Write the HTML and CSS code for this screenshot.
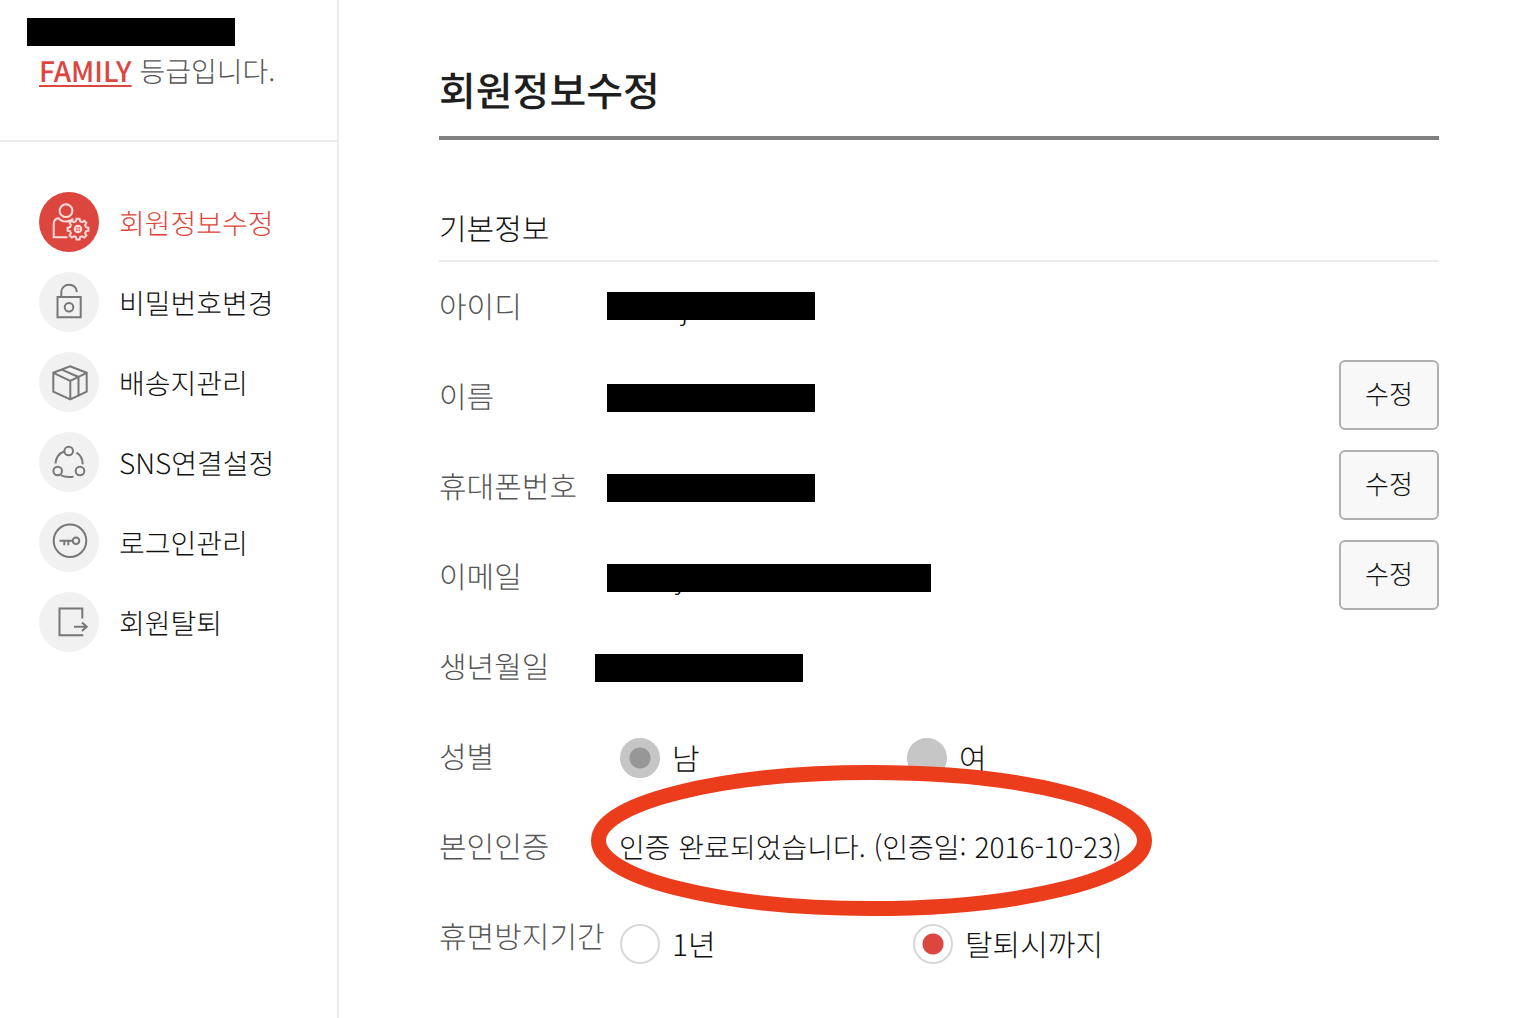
FILE: index.html
```html
<!DOCTYPE html>
<html lang="ko">
<head>
  <meta charset="UTF-8" />
  <title>회원정보수정</title>
  <link rel="stylesheet" href="styles.css">
</head>
<body>
  <aside class="sidebar">
    <div class="grade">
      <div class="mask"></div>
      <p class="grade-text"><a href="#">FAMILY</a> 등급입니다.</p>
    </div>

    <nav class="menu">
      <a class="menu-item active" href="#">
        <svg class="icon" viewBox="0 0 60 60">
          <circle cx="27" cy="18.7" r="6.4" />
          <path d="M28.5 45.3H14.7V32.500c0-4 2-6 5-6.200 1.700 2.200 4.200 3.200 7.300 3.200s5.300-.8 7.300-2.700" />
          <path class="gear" d="M37.500 26.800h3l.6 2.500 2 .8 2.200-1.300 2.100 2.100-1.300 2.200.8 2 2.500.6v3l-2.500.6-.8 2 1.300 2.200-2.100 2.100-2.200-1.300-2 .8-.6 2.500h-3l-.6-2.500-2-.8-2.200 1.300-2.100-2.100 1.300-2.200-.8-2-2.500-.6v-3l2.500-.6.8-2-1.300-2.200 2.100-2.100 2.200 1.300 2-.8z" />
          <circle cx="39" cy="37" r="3.300" />
          <path class="thin" d="M39 33.700v6.600M35.700 37h6.600" />
        </svg>
        <span>회원정보수정</span>
      </a>
      <a class="menu-item" href="#">
        <svg class="icon" viewBox="0 0 60 60">
          <path d="M18.500 25h23.200v20.300H18.500zM22.300 25v-4.500c0-4.800 3.200-7.700 7.700-7.700 4.300 0 7.200 2.500 8 7.200" />
          <circle cx="30" cy="35.300" r="4.300" />
        </svg>
        <span>비밀번호변경</span>
      </a>
      <a class="menu-item" href="#">
        <svg class="icon" viewBox="0 0 60 60">
          <path d="M31 14.300l16.700 6.500v18.900l-16.400 7.600-17-7.600V20.800zM14.300 20.800l17 8 16.400-8M31.300 28.800v18.500M39.500 25v18.500M22.700 17.600l16.800 7.400" />
        </svg>
        <span>배송지관리</span>
      </a>
      <a class="menu-item" href="#">
        <svg class="icon" viewBox="0 0 60 60">
          <circle cx="29.700" cy="19" r="4.300" />
          <circle cx="18.700" cy="39" r="4.300" />
          <circle cx="41" cy="39" r="4.300" />
          <path d="M16.500 31.500c.3-5.500 3-9.800 8.500-12M37.500 20.700c4 2.500 6.200 6.500 6.200 11.500M22 43.300c3.500 1.600 8 1.900 12.500 1.400" />
        </svg>
        <span>SNS연결설정</span>
      </a>
      <a class="menu-item" href="#">
        <svg class="icon" viewBox="0 0 60 60">
          <circle cx="31" cy="28.700" r="16.300" />
          <circle cx="37" cy="28.700" r="3.300" />
          <path d="M20.500 28.700h13.200M25.300 28.700v4.500M29.300 28.700v4.500" />
        </svg>
        <span>로그인관리</span>
      </a>
      <a class="menu-item" href="#">
        <svg class="icon" viewBox="0 0 60 60">
          <path d="M43.300 26.500V16.500H20.500v26.800h22.800v-1M35 34.700h12.500M43 30.500l4.700 4.200-4.700 4.200" />
        </svg>
        <span>회원탈퇴</span>
      </a>
    </nav>
  </aside>

  <main class="content">
    <h1>회원정보수정</h1>
    <h2>기본정보</h2>

    <form class="info">
      <div class="row">
        <span class="label">아이디</span>
        <div class="value"><div class="mask"><span class="tail">j</span></div></div>
      </div>
      <div class="row">
        <span class="label">이름</span>
        <div class="value"><div class="mask"></div></div>
        <button type="button">수정</button>
      </div>
      <div class="row">
        <span class="label">휴대폰번호</span>
        <div class="value"><div class="mask"></div></div>
        <button type="button">수정</button>
      </div>
      <div class="row">
        <span class="label">이메일</span>
        <div class="value"><div class="mask wide"><span class="tail">j</span></div></div>
        <button type="button">수정</button>
      </div>
      <div class="row">
        <span class="label">생년월일</span>
        <div class="value"><div class="mask birth"></div></div>
      </div>
      <div class="row" role="radiogroup" aria-labelledby="gender">
        <span class="label" id="gender">성별</span>
        <div class="value options">
          <label><input type="radio" name="gender" checked disabled><span>남</span></label>
          <label><input type="radio" name="gender" disabled><span>여</span></label>
        </div>
      </div>
      <div class="row">
        <span class="label">본인인증</span>
        <div class="value verified">
          인증 완료되었습니다. (인증일: 2016-10-23)
          <svg class="marker" viewBox="0 0 561 151">
            <ellipse cx="280.500" cy="75.500" rx="273" ry="68" />
          </svg>
        </div>
      </div>
      <div class="row" role="radiogroup" aria-labelledby="period">
        <span class="label" id="period">휴면방지기간</span>
        <div class="value options period">
          <label><input type="radio" name="period"><span>1년</span></label>
          <label><input type="radio" name="period" checked><span>탈퇴시까지</span></label>
        </div>
      </div>
    </form>
  </main>
</body>
</html>
```
FILE: styles.css
```css
* {
  box-sizing: border-box;
  margin: 0;
  padding: 0;
}

body {
  display: flex;
  min-height: 100vh;
  font-family: "Noto Sans CJK KR", sans-serif;
  font-size: 28px;
  font-weight: 300;
  line-height: 40px;
  text-rendering: geometricPrecision;
  color: #111;
  background: #fff;
}

/* sidebar */
.sidebar {
  flex: 0 0 339px;
  border-right: 2px solid #ebebeb;
}

.grade {
  height: 142px;
  padding: 18px 27px 0;
  border-bottom: 2px solid #ebebeb;
}

.grade-text {
  margin: 5px 0 0 12px;
  color: #555;
}

.grade-text a {
  font-weight: 500;
  color: #dd463e;
  text-decoration-thickness: 2px;
  text-underline-offset: 3px;
}

.menu {
  display: flex;
  flex-direction: column;
  gap: 20px;
  padding: 50px 39px;
}

.menu-item {
  display: flex;
  align-items: center;
  gap: 20px;
  color: inherit;
  text-decoration: none;
  white-space: nowrap;
}

.menu-item span {
  padding-top: 2px;
}

.icon {
  flex: none;
  width: 60px;
  height: 60px;
  border-radius: 50%;
  background: #f1f1f1;
  fill: none;
  stroke: #777;
  stroke-width: 2;
}

.active {
  color: #dd463e;
}

.active .icon {
  background: #dd463e;
  stroke: #fbdcda;
}

.icon .gear {
  fill: #dd463e;
}

.icon .thin {
  stroke-width: 1;
}

/* content */
.content {
  flex: 1;
  padding: 59px 87px 0 100px;
}

h1 {
  padding-bottom: 17px;
  border-bottom: 4px solid #808080;
  font-size: 40px;
  font-weight: 500;
  line-height: 60px;
  color: #1e1e1e;
}

h2 {
  padding: 67px 0 13px;
  border-bottom: 2px solid #ebebeb;
  font-size: 30px;
  font-weight: 300;
}

.row {
  display: flex;
  align-items: center;
  height: 90px;
}

.row:first-child {
  height: 88px;
}

.label {
  flex: 0 0 180px;
  font-size: 30px;
  color: #555;
}

.row:first-child .label {
  padding-bottom: 2px;
}

.value {
  flex: 1;
}

.mask {
  position: relative;
  z-index: 0;
  width: 208px;
  height: 28px;
}

.mask::before {
  content: "";
  position: absolute;
  inset: 0;
  background: #000;
}

.value .mask {
  margin: 6px 0 0 -12px;
}

.row:first-child .mask {
  margin-top: 0;
}

.value .birth {
  margin-left: -24px;
}

.value .wide {
  width: 324px;
}

/* descender that shows below the mask */
.tail {
  position: absolute;
  z-index: -1;
  left: 74px;
  top: -4px;
}

.wide .tail {
  left: 69px;
  top: -7px;
}

button {
  width: 100px;
  height: 70px;
  padding-bottom: 4px;
  border: 2px solid #b0b0b0;
  border-radius: 6px;
  background: #f8f8f8;
  color: inherit;
  font-family: inherit;
  font-size: 26px;
  font-weight: 300;
  line-height: 40px;
  cursor: pointer;
}

.options {
  display: grid;
  grid-template-columns: 287px auto;
  padding: 6px 0 0 1px;
  font-size: 30px;
}

.period {
  grid-template-columns: 293px auto;
  padding-top: 18px;
}

.options label {
  display: flex;
  align-items: center;
  gap: 12px;
}

.options span {
  padding-bottom: 2px;
}

input {
  appearance: none;
  width: 40px;
  height: 40px;
  border: 2px solid #d8d8d8;
  border-radius: 50%;
  background: #fff;
}

input:checked {
  background: radial-gradient(circle, #dd463e 10px, #fff 11px);
}

input:disabled {
  border-color: #c6c6c6;
  background: #c6c6c6;
}

input:checked:disabled {
  background: radial-gradient(circle, #979797 10px, #c6c6c6 11px);
}

.verified {
  position: relative;
  padding-top: 4px;
}

/* circle around the verification text */
.marker {
  position: absolute;
  left: -28px;
  top: -58px;
  width: 561px;
  height: 151px;
  fill: none;
  stroke: #eb3d1c;
  stroke-width: 15;
  pointer-events: none;
}
```
